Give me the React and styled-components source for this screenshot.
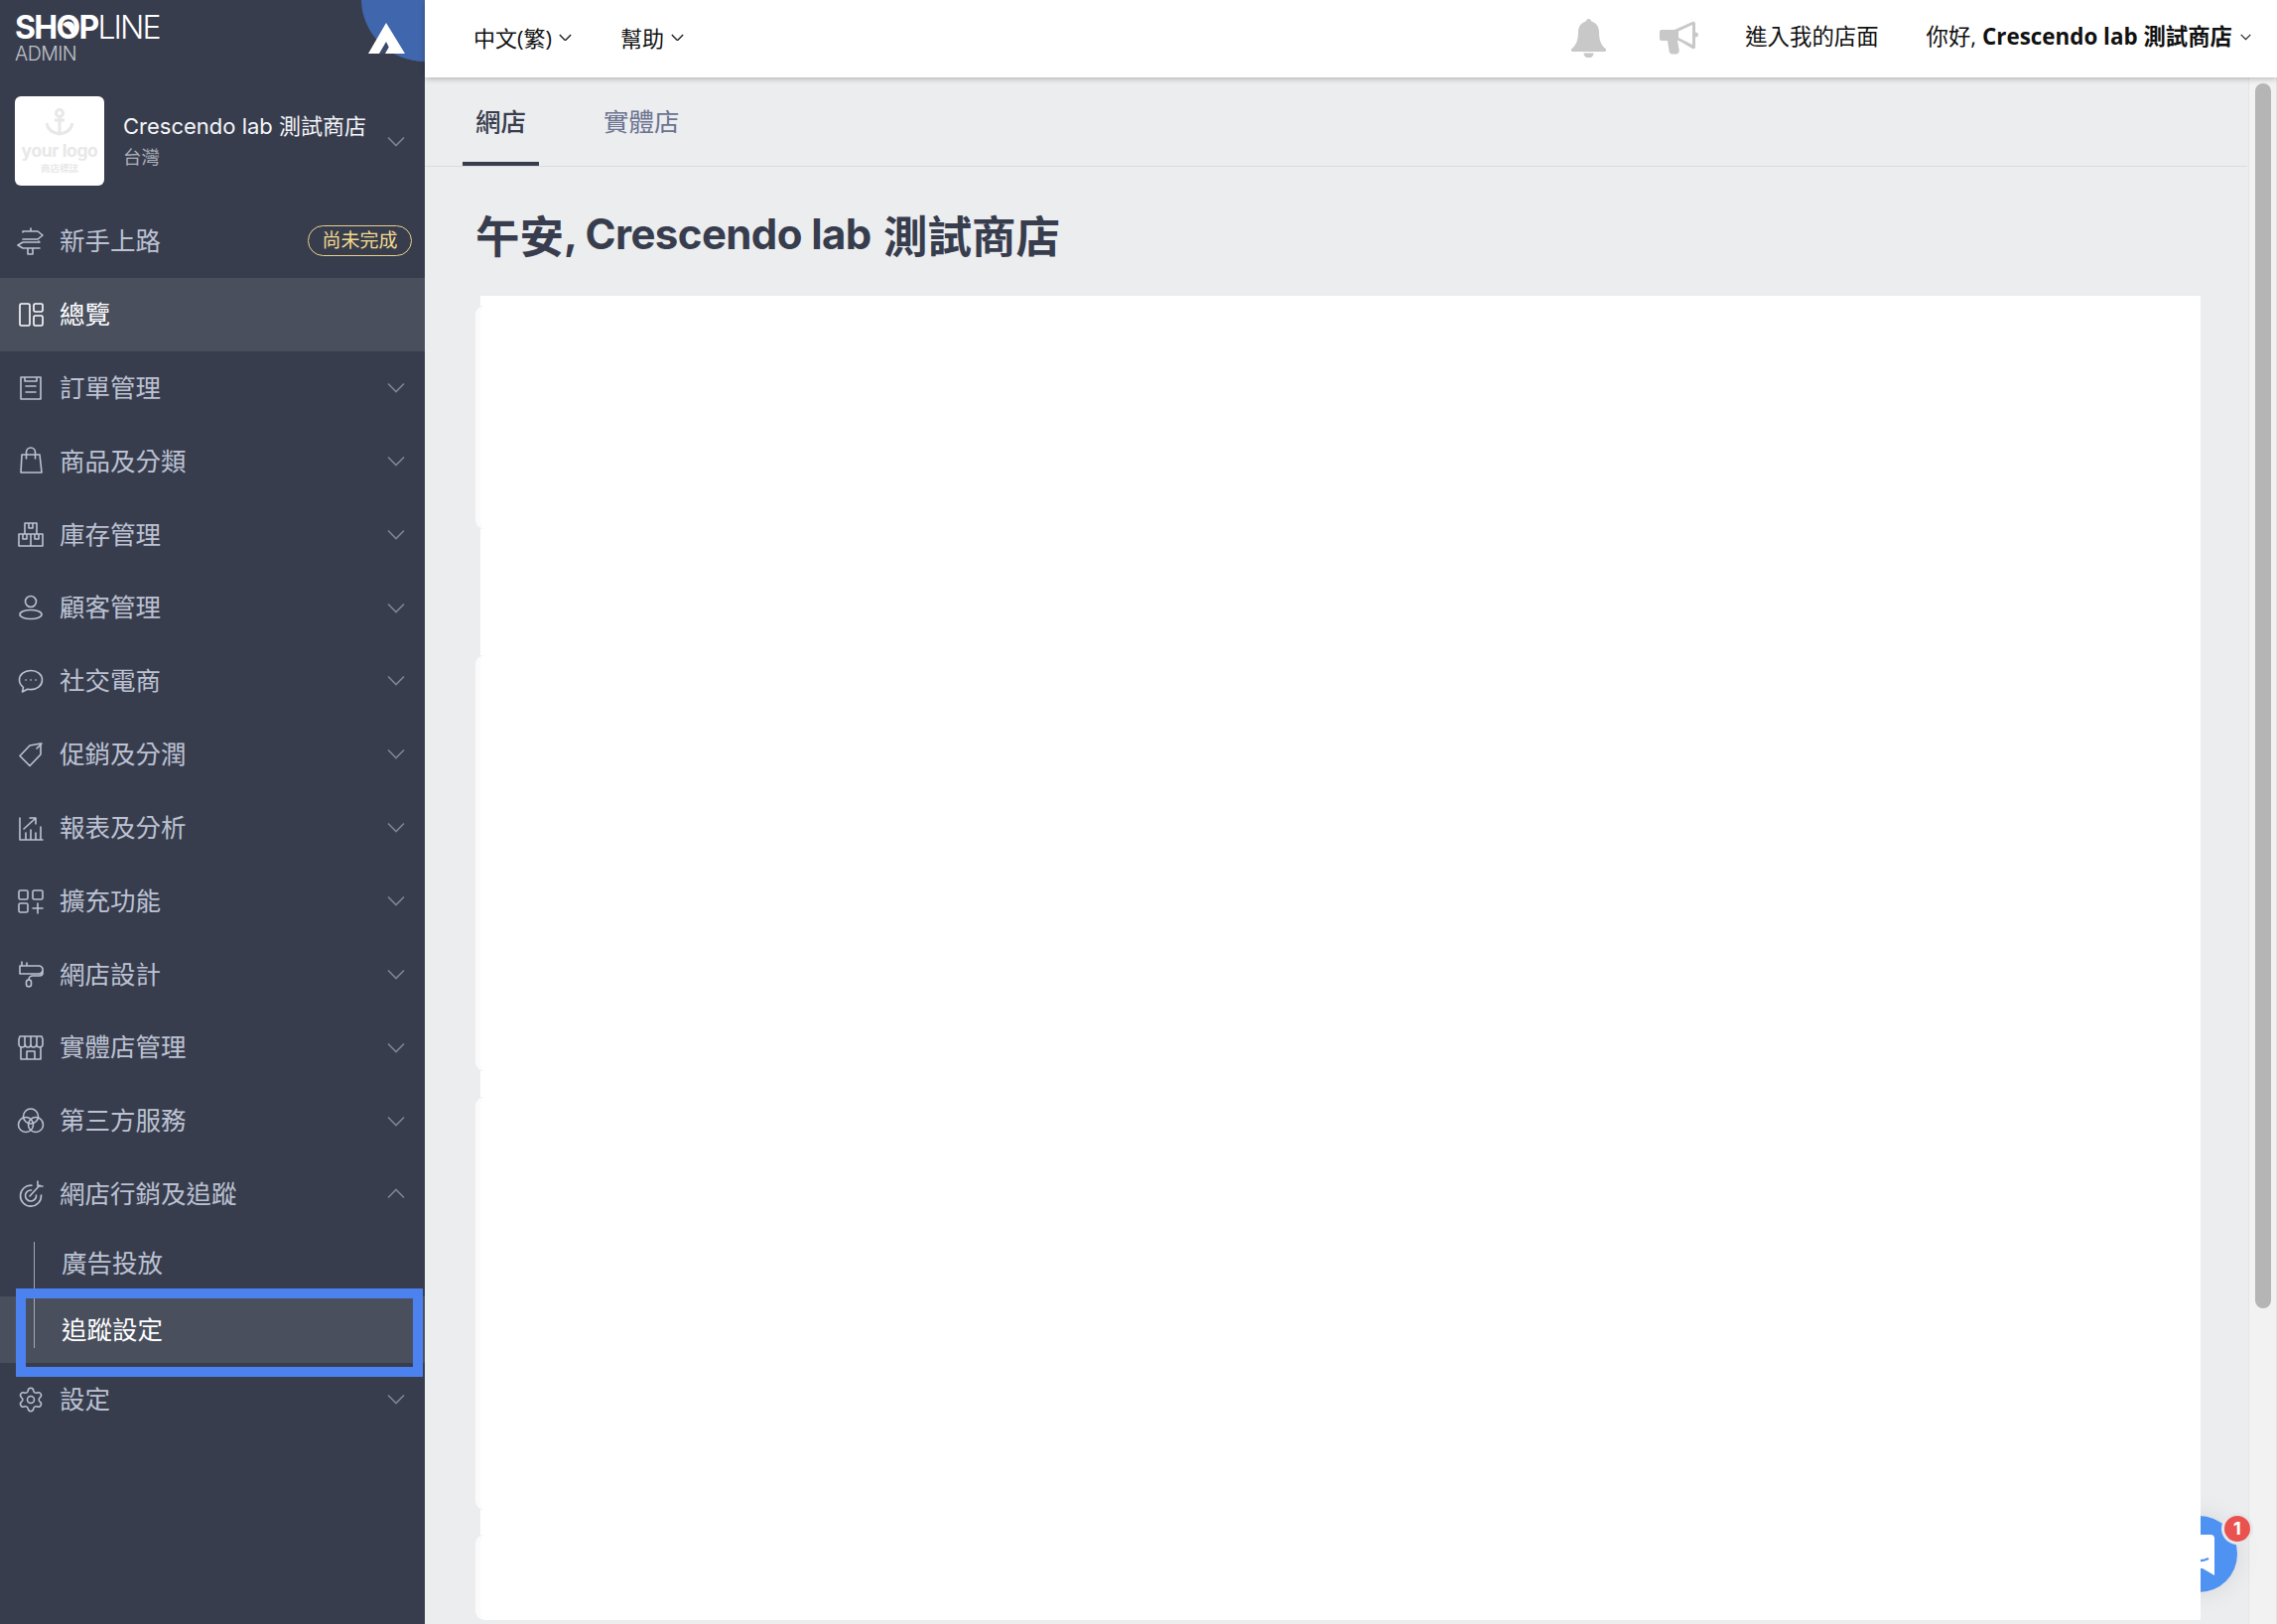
import React from 'react';
import styled, { createGlobalStyle } from 'styled-components';
import { Settings } from 'lucide-react';

const GlobalStyle = createGlobalStyle`
  html, body {
    margin: 0;
    height: 100%;
    overflow: hidden;
    background: #ecedef;
  }
  body {
    font-family: Inter, "Noto Sans CJK TC", sans-serif;
  }
`;

const Page = styled.div`
  display: flex;
  width: 2294px;
  height: 1636px;
`;

const Sidebar = styled.aside`
  position: relative;
  flex: 0 0 428px;
  background: #383d4e;
  color: #bcc2d2;
  font-size: 25.5px;
  overflow: hidden;
`;

const Brand = styled.div`
  position: relative;
  height: 97px;
  padding: 11px 0 0 15px;
  box-sizing: border-box;
  color: #fff;
`;

const Wordmark = styled.div`
  position: relative;
  font-size: 32px;
  line-height: 33px;
  font-weight: 700;
  letter-spacing: -1.7px;
`;

const WordmarkThin = styled.span`
  font-weight: 300;
  letter-spacing: -1.9px;
`;

const Bird = styled.svg`
  position: absolute;
  left: 47px;
  top: 9px;
  width: 14px;
  height: 16px;
`;

const AdminLabel = styled.div`
  font-size: 19.500px;
  line-height: 20px;
  font-weight: 300;
  color: #c3c5cb;
  letter-spacing: -0.5px;
`;

const Corner = styled.div`
  position: absolute;
  right: -64px;
  top: -64px;
  width: 128px;
  height: 126px;
  border-radius: 50%;
  background: #4066ae;
`;

const CornerLogo = styled.svg`
  position: absolute;
  left: 371px;
  top: 23px;
  width: 37px;
  height: 31px;
`;

const Store = styled.div`
  display: flex;
  align-items: center;
  height: 109px;
  padding: 0 20px 19px 15px;
  box-sizing: border-box;
`;

const StoreLogo = styled.div`
  flex: 0 0 90px;
  height: 90px;
  border-radius: 6px;
  background: #fff;
  display: flex;
  flex-direction: column;
  align-items: center;
  padding-top: 12px;
  box-sizing: border-box;
  color: #e8e8e8;
`;

const LogoText = styled.div`
  font-size: 17.500px;
  line-height: 20px;
  font-weight: 700;
  letter-spacing: -0.4px;
  margin-top: 5px;
`;

const LogoSub = styled.div`
  font-size: 9.500px;
  line-height: 13px;
  font-weight: 700;
  margin-top: 1px;
`;

const StoreText = styled.div`
  flex: 1;
  margin-left: 19px;
`;

const StoreName = styled.div`
  font-size: 22px;
  line-height: 32px;
  color: #f4f5f7;
`;

const StoreRegion = styled.div`
  font-size: 18.500px;
  line-height: 31px;
  color: #aeb2bc;
`;

const Row = styled.div`
  position: relative;
  display: flex;
  align-items: center;
  height: ${(p) => (p.$sub ? `${p.$h}px` : '73.85px')};
  padding: ${(p) => (p.$sub ? '0 20px 0 62px' : '0 20px 0 17px')};
  box-sizing: border-box;
  background: ${(p) => (p.$active ? '#4a4f5e' : 'transparent')};
  color: ${(p) => (p.$active ? '#fff' : '#bcc2d2')};
`;

const RowIcon = styled.span`
  flex: 0 0 28px;
  height: 28px;
  margin-right: 15px;
  display: flex;
`;

const RowLabel = styled.span`
  flex: 1;
  line-height: 1;
`;

const ChevronIcon = styled.svg`
  width: ${(p) => p.$w || 18}px;
  height: ${(p) => (p.$w ? p.$w * 0.6 : 11)}px;
  flex: none;
  color: ${(p) => p.$color || '#7e8493'};
  transform: ${(p) => (p.$up ? 'rotate(180deg)' : 'none')};
`;

const PendingBadge = styled.span`
  width: 105px;
  height: 31px;
  margin-right: -7px;
  margin-top: -1px;
  border: 1px solid #e8d08c;
  border-radius: 16px;
  box-sizing: border-box;
  color: #f3da8d;
  font-size: 19px;
  line-height: 29px;
  text-align: center;
`;

const SubList = styled.div`
  position: relative;
  &::before {
    content: '';
    position: absolute;
    left: 34px;
    top: 11px;
    bottom: 15px;
    width: 1px;
    background: #a4a8b3;
    z-index: 1;
  }
`;

const Highlight = styled.div`
  position: absolute;
  left: 16px;
  top: -8px;
  width: 410px;
  height: 89px;
  border: 10px solid #4b82f0;
  box-sizing: border-box;
  z-index: 2;
`;

const Main = styled.div`
  flex: 1;
  min-width: 0;
  display: flex;
  flex-direction: column;
`;

const TopBar = styled.header`
  position: relative;
  z-index: 5;
  flex: 0 0 78px;
  display: flex;
  align-items: center;
  justify-content: space-between;
  padding: 0 26px 2px 49px;
  box-sizing: border-box;
  background: #fff;
  box-shadow: 0 1px 6px rgba(0, 0, 0, 0.28);
  font-family: "Open Sans", "Noto Sans CJK TC", sans-serif;
  font-size: 22px;
  color: #111;
`;

const TopGroup = styled.div`
  display: flex;
  align-items: center;
  gap: ${(p) => p.$gap}px;
`;

const TopItem = styled.div`
  display: flex;
  align-items: center;
  gap: ${(p) => p.$gap || 7}px;
  margin-bottom: 1px;
  font-size: ${(p) => p.$size || 22}px;
  line-height: 1;
  white-space: nowrap;
`;

const TopIcon = styled.svg`
  fill: #c8c8c8;
  margin-right: ${(p) => p.$after}px;
`;

const Strong = styled.b`
  font-weight: 700;
`;

const Body = styled.div`
  flex: 1;
  min-height: 0;
  display: flex;
`;

const Content = styled.main`
  position: relative;
  z-index: 2;
  flex: 1;
  min-width: 0;
`;

const TabBar = styled.nav`
  display: flex;
  height: 89px;
  margin-right: 1px;
  padding-left: 38px;
  border-bottom: 1px solid #d9dbe0;
`;

const Tab = styled.div`
  display: flex;
  align-items: center;
  height: 89px;
  padding: 0 13px;
  margin-right: 52px;
  box-sizing: border-box;
  font-size: 25.500px;
  font-weight: ${(p) => (p.$active ? 500 : 400)};
  color: ${(p) => (p.$active ? '#383d4e' : '#6b7390')};
  border-bottom: 4px solid ${(p) => (p.$active ? '#383d4e' : 'transparent')};
`;

const Title = styled.h1`
  margin: 0;
  height: 130px;
  padding: 5px 0 0 51px;
  box-sizing: border-box;
  display: flex;
  align-items: center;
  font-size: 44.500px;
  font-weight: 700;
  color: #383d4e;
  white-space: pre;
`;

const TitleLatin = styled.span`
  font-size: 42px;
  letter-spacing: -0.6px;
  margin-right: 3px;
`;

const Panel = styled.div`
  position: relative;
  z-index: 2;
  width: 1738px;
  margin-left: 51px;
`;

const PanelBand = styled.div`
  height: ${(p) => p.$h}px;
  background: #fff;
  margin-left: ${(p) => (p.$wide ? 0 : 5)}px;
  border-left: ${(p) => (p.$wide ? '5px solid #fbfbfc' : '0')};
  border-radius: ${(p) => (p.$wide ? '9px 0 0 9px' : '0')};
`;

const ChatButton = styled.div`
  position: absolute;
  z-index: 1;
  right: 11px;
  bottom: 32px;
  width: 77px;
  height: 77px;
  border-radius: 50%;
  background: #4f93f2;
  box-shadow: 0 0 26px rgba(0, 0, 0, 0.1);
`;

const ChatBadge = styled.span`
  position: absolute;
  right: -13px;
  top: 0;
  width: 26px;
  height: 26px;
  border-radius: 50%;
  background: #e9524f;
  box-shadow: 0 0 0 3px #e6e7ea;
  color: #fff;
  font-size: 18px;
  font-weight: 700;
  line-height: 26px;
  text-align: center;
`;

const ScrollTrack = styled.div`
  position: relative;
  z-index: 1;
  flex: 0 0 29px;
  padding: 6px 5px 0 6px;
  box-sizing: border-box;
  background: #f2f2f3;
  border-left: 1px solid #e4e5e7;
  border-right: 1px solid #e2e2e3;
`;

const ScrollThumb = styled.div`
  width: 16px;
  height: 1234px;
  border-radius: 8px;
  background: #b5b5b5;
`;

const Svg = ({ children, w = 28, h = 28 }) => (
  <svg width={w} height={h} viewBox={`0 0 ${w} ${h}`} fill="none" stroke="currentColor" strokeWidth="1.6" strokeLinejoin="round" strokeLinecap="round">
    {children}
  </svg>
);

const Chevron = ({ up, w, color, weight = 1.6 }) => (
  <ChevronIcon $up={up} $w={w} $color={color} viewBox="0 0 18 11" fill="none" stroke="currentColor" strokeWidth={weight}>
    <path d="M1 1.5l8 8 8-8" />
  </ChevronIcon>
);

const icons = {
  road: (
    <Svg>
      <path d="M14 1v3M6 4h15l5 4-5 4H6M6 4v1M22 14v1M23 15H6l-5 3 5 3h17M11 21v6h5v-6" />
    </Svg>
  ),
  overview: (
    <Svg>
      <rect x="3" y="3" width="10" height="22" rx="1.5" />
      <rect x="17" y="3" width="9" height="8" rx="1.5" />
      <rect x="17" y="15" width="9" height="10" rx="1.5" />
    </Svg>
  ),
  order: (
    <Svg>
      <path d="M8 3H4v22h20V3h-4M8 3h12v4H8zM9 12h10M9 18h10" />
    </Svg>
  ),
  bag: (
    <Svg>
      <path d="M5 8h18l2 18H4zM9.500 12V5.500a4.500 4.500 0 0 1 9 0V12" />
    </Svg>
  ),
  stock: (
    <Svg>
      <path d="M8 3h12v11H8zM12 3v5h4V3M2 14h24v12H2zM14 14v12M6 14v5h4v-5M18 14v5h4v-5" />
    </Svg>
  ),
  customer: (
    <Svg>
      <circle cx="14" cy="8" r="5.500" />
      <ellipse cx="14" cy="21" rx="11" ry="4.500" />
    </Svg>
  ),
  chat: (
    <Svg>
      <path d="M14 3.500C7.500 3.500 2.500 7.500 2.500 13c0 3.200 1.500 5.500 4 7.300L5.500 25l5.200-2.800c1.100.3 2.200.4 3.300.4 6.500 0 11.500-4 11.500-9.600S20.500 3.500 14 3.500z" />
      <path d="M9 13h.2M14 13h.2M19 13h.2" />
    </Svg>
  ),
  tag: (
    <Svg>
      <path d="M24 3v11L13 25.500 3 15.500 13 5l11-2z" />
      <path d="M20 8l5-5" />
    </Svg>
  ),
  report: (
    <Svg>
      <path d="M3 4v22h23M9 26v-7M14 26v-10M19 26v-7M24 26V13M7 15l11-10M13 4h6v6" />
    </Svg>
  ),
  extension: (
    <Svg>
      <rect x="2" y="3" width="9" height="9" rx="1.500" />
      <rect x="16" y="3" width="10" height="9" rx="1.500" />
      <rect x="2" y="16" width="9" height="9" rx="1.500" />
      <path d="M21 16v10M16 21h10" />
    </Svg>
  ),
  design: (
    <Svg>
      <path d="M5 2v4M10 3v3M3 6h19a4 4 0 0 1 4 3v2a4 4 0 0 1-4 3H3zM26 11v2a3 3 0 0 1-3 3h-7a4 4 0 0 0-4 4" />
      <rect x="9.500" y="20" width="5" height="7" rx="2.500" />
    </Svg>
  ),
  shop: (
    <Svg>
      <path d="M3 3h22l1 3v5c0 2-1.500 3-3.200 3s-3-1-3-3c0 2-1.500 3-3.300 3s-2.500-1-2.500-3c0 2-1 3-2.700 3s-3-1-3-3c0 2-1.300 3-3 3S2 13 2 11V6zM8 3v8M14 3v8M20 3v8M4 14v12h20V14M10 26v-8h8v8" />
    </Svg>
  ),
  partner: (
    <Svg>
      <circle cx="14" cy="9.500" r="7.500" />
      <circle cx="9" cy="18" r="7.500" />
      <circle cx="19" cy="18" r="7.500" />
    </Svg>
  ),
  target: (
    <Svg>
      <path d="M15 5.200A10.500 10.500 0 1 0 24.500 15" />
      <path d="M14.500 10A5.500 5.500 0 1 0 19.500 15" />
      <path d="M13 16L23 5M21 1v5h5" />
    </Svg>
  ),
  settings: <Settings size={28} strokeWidth={1.3} />,
};

const menu = [
  ['order', '訂單管理'],
  ['bag', '商品及分類'],
  ['stock', '庫存管理'],
  ['customer', '顧客管理'],
  ['chat', '社交電商'],
  ['tag', '促銷及分潤'],
  ['report', '報表及分析'],
  ['extension', '擴充功能'],
  ['design', '網店設計'],
  ['shop', '實體店管理'],
  ['partner', '第三方服務'],
];

const panelBands = [
  [10, false],
  [225, true],
  [127, false],
  [419, true],
  [26, false],
  [416, true],
  [25, false],
  [86, true],
];

const MenuRow = ({ icon, label, open }) => (
  <Row>
    <RowIcon>{icons[icon]}</RowIcon>
    <RowLabel>{label}</RowLabel>
    <Chevron up={open} />
  </Row>
);

const App = () => (
  <Page>
    <GlobalStyle />
    <Sidebar>
      <Corner />
      <CornerLogo viewBox="0 0 37 31">
        <polygon points="18,0 37,31 0,31" fill="#fff" />
        <polygon points="11,31 18,19 24,31" fill="#3f4a6a" />
        <polygon points="17,31 21,24 25,31" fill="#fff" />
      </CornerLogo>
      <Brand>
        <Wordmark>
          SHOP<WordmarkThin>LINE</WordmarkThin>
          <Bird viewBox="0 0 14 16">
            <path d="M1 5c2-4 8-5 11-1 2 3 1 8-1 11L7 9 1 5z" fill="#fff" />
          </Bird>
        </Wordmark>
        <AdminLabel>ADMIN</AdminLabel>
      </Brand>
      <Store>
        <StoreLogo>
          <svg width="30" height="28" viewBox="0 0 30 28" fill="none" stroke="currentColor" strokeWidth="3">
            <circle cx="15" cy="5" r="3.500" />
            <path d="M15 9v17M10 12h10M2 15c1 7 6 10 13 11 7-1 12-4 13-11" />
          </svg>
          <LogoText>your logo</LogoText>
          <LogoSub>商店標誌</LogoSub>
        </StoreLogo>
        <StoreText>
          <StoreName>Crescendo lab 測試商店</StoreName>
          <StoreRegion>台灣</StoreRegion>
        </StoreText>
        <Chevron />
      </Store>
      <Row>
        <RowIcon>{icons.road}</RowIcon>
        <RowLabel>新手上路</RowLabel>
        <PendingBadge>尚未完成</PendingBadge>
      </Row>
      <Row $active>
        <RowIcon>{icons.overview}</RowIcon>
        <RowLabel>總覽</RowLabel>
      </Row>
      {menu.map(([icon, label]) => (
        <MenuRow key={label} icon={icon} label={label} />
      ))}
      <MenuRow icon="target" label="網店行銷及追蹤" open />
      <SubList>
        <Row $sub $h={66}>
          <RowLabel>廣告投放</RowLabel>
        </Row>
        <Row $sub $h={67} $active>
          <RowLabel>追蹤設定</RowLabel>
          <Highlight />
        </Row>
      </SubList>
      <MenuRow icon="settings" label="設定" />
    </Sidebar>
    <Main>
      <TopBar>
        <TopGroup $gap={49}>
          <TopItem>
            中文(繁)
            <Chevron w={13} color="#222" weight={2} />
          </TopItem>
          <TopItem>
            幫助
            <Chevron w={13} color="#222" weight={2} />
          </TopItem>
        </TopGroup>
        <TopGroup $gap={48}>
          <TopIcon $after={6} width="35" height="39" viewBox="0 0 35 39">
            <path d="M17.500 0c1.500 0 2.500 1 2.500 2.500 5 1.200 8 5 8 11 0 8 2 13 7 17 .5 1.500 0 2.500-1.500 2.500H1.500C0 33-.5 32 0 30.500c5-4 7-9 7-17 0-6 3-9.800 8-11C15 1 16 0 17.500 0z" />
            <path d="M12.500 34.500h10a5 5 0 0 1-10 0z" />
          </TopIcon>
          <TopIcon $after={-3} width="41" height="34" viewBox="0 0 41 34">
            <path d="M2 9h13L33 1c1.500-.7 3-.3 3 2v8.500c2 0 3 1 3 2.500s-1 2.500-3 2.500V26c0 2-1.500 2.700-3 2-5-3-10-6.500-15-8.500l1.500 9c.6 3-.5 5-3.500 5h-3c-2 0-3-1-3.400-3L8 20H2c-1.200 0-2-.8-2-2v-7c0-1.200.8-2 2-2z" />
            <path d="M19 10.500l14-6.500v20l-14-7z" fill="#fff" />
          </TopIcon>
          <TopItem $size={22.4}>進入我的店面</TopItem>
          <TopItem $size={22.4} $gap={8}>
            <span>
              你好, <Strong>Crescendo lab 測試商店</Strong>
            </span>
            <Chevron w={11} color="#222" weight={2} />
          </TopItem>
        </TopGroup>
      </TopBar>
      <Body>
        <Content>
          <TabBar>
            <Tab $active>網店</Tab>
            <Tab>實體店</Tab>
          </TabBar>
          <Title>
            午安<TitleLatin>, Crescendo lab </TitleLatin>測試商店
          </Title>
          <Panel>
            {panelBands.map(([h, wide], i) => (
              <PanelBand key={i} $h={h} $wide={wide} />
            ))}
          </Panel>
          <ChatButton>
            <svg width="77" height="77" viewBox="0 0 77 77" fill="#fff">
              <path d="M26 19h24a4 4 0 0 1 4 4v37L42 53H26a4 4 0 0 1-4-4V23a4 4 0 0 1 4-4z" />
              <path d="M30 42c5 4 12 4 18 1" fill="none" stroke="#4f93f2" strokeWidth="2.500" />
            </svg>
            <ChatBadge>1</ChatBadge>
          </ChatButton>
        </Content>
        <ScrollTrack>
          <ScrollThumb />
        </ScrollTrack>
      </Body>
    </Main>
  </Page>
);

export default App;
